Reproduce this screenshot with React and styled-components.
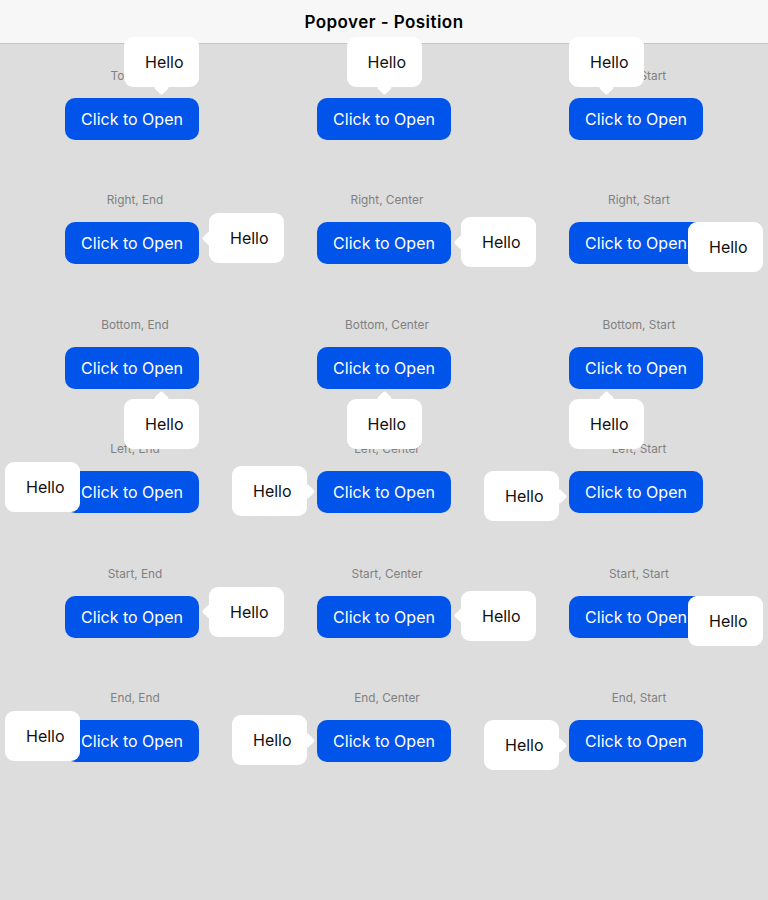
import React from 'react';
import styled, { createGlobalStyle, css } from 'styled-components';

const GlobalStyle = createGlobalStyle`
  html, body {
    margin: 0;
    padding: 0;
  }
  body {
    background: #dddddd;
    font-family: Inter, "Noto Sans", sans-serif;
    -webkit-font-smoothing: antialiased;
  }
`;

const Page = styled.div`
  min-height: 900px;
  background: #dddddd;
  display: flex;
  flex-direction: column;
`;

const Header = styled.header`
  height: 43px;
  background: #f7f7f7;
  border-bottom: 1px solid #c6c6c6;
  display: flex;
  align-items: center;
  justify-content: center;
  font-size: 17px;
  font-weight: 600;
  letter-spacing: 0.45px;
  color: #000;
`;

const Grid = styled.main`
  display: grid;
  grid-template-columns: repeat(3, 1fr);
  row-gap: 53.45px;
  padding: 25px 6px 0;
`;

const Cell = styled.div`
  display: flex;
  flex-direction: column;
  align-items: center;
`;

const Label = styled.div`
  font-size: 11.8px;
  line-height: 14px;
  color: #808080;
  margin: 0 0 15px 6px;
`;

const Anchor = styled.div`
  position: relative;
`;

const OpenButton = styled.button`
  width: 134px;
  height: 42px;
  padding: 0;
  border: 0;
  border-radius: 10px;
  background: #0054e9;
  color: #fff;
  font-family: Inter, "Noto Sans", sans-serif;
  font-size: 16px;
  cursor: pointer;
`;

const sideCss = {
  top: css`bottom: calc(100% + 11px);`,
  bottom: css`top: calc(100% + 10px);`,
  right: css`left: calc(100% + 10px);`,
  left: css`right: calc(100% + 10px);`,
};

const alignCss = (side, align) => {
  if (side === 'top' || side === 'bottom') {
    if (align === 'end') return css`right: 0;`;
    if (align === 'center') return css`left: 50%; margin-left: -37.5px;`;
    return css`left: 0;`;
  }
  if (align === 'end') return css`top: -9px;`;
  if (align === 'center') return css`top: -5px;`;
  return css`top: 0;`;
};

const Popover = styled.div`
  position: absolute;
  z-index: 10;
  width: 75px;
  height: 50px;
  box-sizing: border-box;
  padding-left: 21px;
  display: flex;
  align-items: center;
  background: #fff;
  border-radius: 9px;
  font-size: 16px;
  color: #111;
  ${(p) => sideCss[p.$side]}
  ${(p) => alignCss(p.$side, p.$align)}
  ${(p) =>
    p.$shift !== undefined &&
    css`
      left: ${p.$shift}px;
      right: auto;
    `}
`;

const arrowCss = {
  top: css`bottom: -5.5px; left: 50%; margin-left: -5.5px;`,
  bottom: css`top: -5.5px; left: 50%; margin-left: -5.5px;`,
  right: css`left: -5.5px; top: 50%; margin-top: -5.5px;`,
  left: css`right: -5.5px; top: 50%; margin-top: -5.5px;`,
};

const Arrow = styled.span`
  position: absolute;
  width: 11px;
  height: 11px;
  background: #fff;
  border-radius: 2px;
  transform: rotate(45deg);
  ${(p) => arrowCss[p.$side]}
`;

const Text = styled.span`
  position: relative;
`;

const rows = [
  ['Top', 'top'],
  ['Right', 'right'],
  ['Bottom', 'bottom'],
  ['Left', 'left'],
  ['Start', 'right'],
  ['End', 'left'],
];

const aligns = [
  ['End', 'end'],
  ['Center', 'center'],
  ['Start', 'start'],
];

const shiftFor = (side, align) => {
  if (side === 'right' && align === 'start') return 119;
  if (side === 'left' && align === 'end') return -60;
  return undefined;
};

export default function App() {
  return (
    <Page>
      <GlobalStyle />
      <Header>Popover - Position</Header>
      <Grid>
        {rows.map(([sideName, side]) =>
          aligns.map(([alignName, align]) => {
            const shift = shiftFor(side, align);
            return (
              <Cell key={sideName + alignName}>
                <Label>
                  {sideName}, {alignName}
                </Label>
                <Anchor>
                  <OpenButton>Click to Open</OpenButton>
                  <Popover $side={side} $align={align} $shift={shift}>
                    {shift === undefined && <Arrow $side={side} />}
                    <Text>Hello</Text>
                  </Popover>
                </Anchor>
              </Cell>
            );
          })
        )}
      </Grid>
    </Page>
  );
}
